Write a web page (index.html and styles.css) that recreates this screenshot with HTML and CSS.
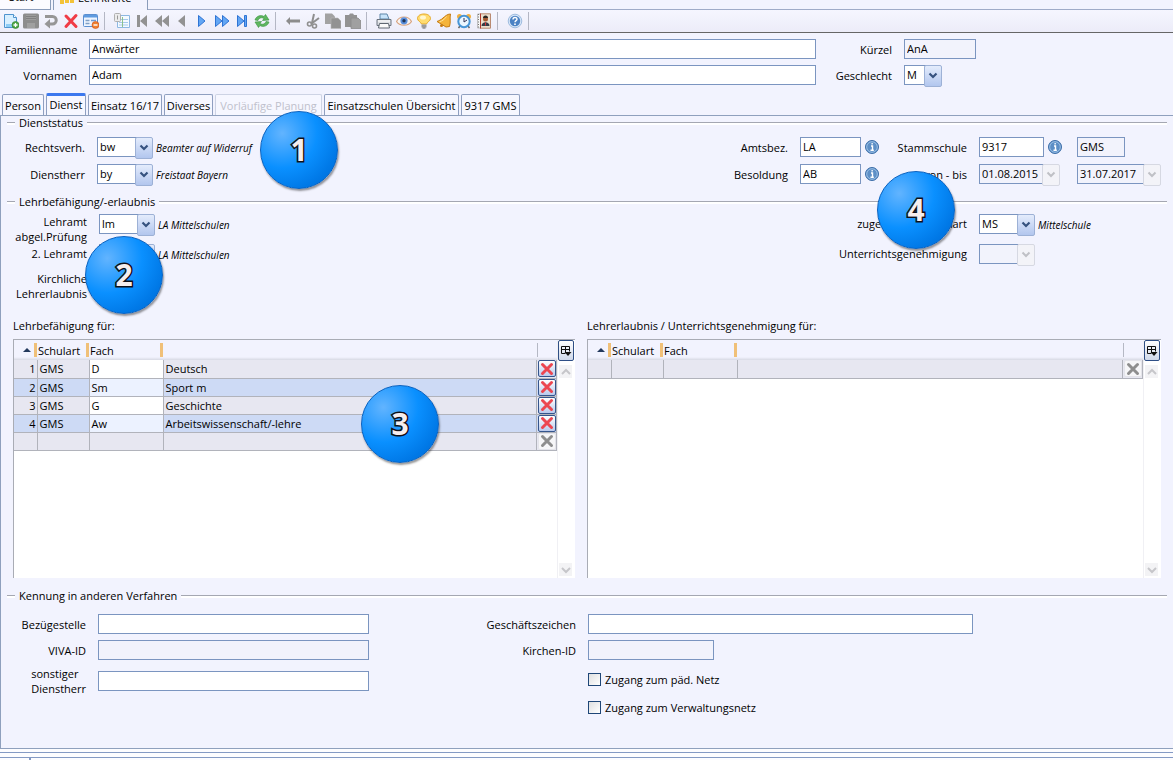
FILE: index.html
```html
<!DOCTYPE html>
<html lang="de">
<head>
<meta charset="utf-8">
<title>Lehrkräfte</title>
<link rel="stylesheet" href="styles.css">
</head>
<body>
<div class="app">
  <nav class="doc-tabs" aria-label="Dokumente">
    <a class="doc-tab" href="#start">Start <svg width="8" height="8" viewBox="0 0 8 8"><path d="M1 4h6" stroke="#b9bfd4" stroke-width="2"/></svg></a>
    <a class="doc-tab doc-tab-active" href="#lehr"><svg width="16" height="16" viewBox="0 0 16 16"><path d="M1 3h4v12H1zM6 5h4v9H6zM11 3h4v11h-4z" fill="#f3c238"/></svg>Lehrkräfte <svg width="8" height="8" viewBox="0 0 8 8"><path d="M1 4h6" stroke="#b9bfd4" stroke-width="2"/></svg></a>
    <span class="doc-rest"></span>
  </nav>

  <div class="toolbar" role="toolbar">
    <button class="tool" aria-label="Neu"><svg viewBox="0 0 16 16"><path d="M1.500 1.500h9l3 3v10h-12z" fill="#d8efff" stroke="#4f94cf"/><path d="M3 11h9v3H3z" fill="#8dccf5"/><path d="M10.500 1.500v3h3" fill="#fff" stroke="#4f94cf"/><circle cx="12.500" cy="12" r="3.500" fill="#4fa746" stroke="#2c7d2a" stroke-width=".6"/><path d="M12.500 10v4M10.500 12h4" stroke="#fff" stroke-width="1.300"/></svg></button>
    <button class="tool" aria-label="Speichern"><svg viewBox="0 0 16 16"><rect width="16" height="15" y=".5" rx="1.500" fill="#8d8d8d"/><path d="M3 2h10v5H3z" fill="#9c9c9c"/><path d="M3 3.500h10M3 5.500h10M4 11h8" stroke="#808080"/><path d="M4 10h8v5H4z" fill="#a0a0a0"/></svg></button>
    <button class="tool" aria-label="Rückgängig"><svg viewBox="0 0 16 16"><path d="M2 3.500h7.500a3.500 3.500 0 0 1 0 7.500H6" fill="none" stroke="#969696" stroke-width="3"/><path d="M7 6v9.500L1.500 11z" fill="#969696"/></svg></button>
    <button class="tool" aria-label="Löschen"><svg viewBox="0 0 16 16"><path d="M3 3l10 10.500M13 2.500L3 13.500" stroke="#f03c46" stroke-width="3" stroke-linecap="round"/></svg></button>
    <button class="tool" aria-label="Formular leeren"><svg viewBox="0 0 16 16"><rect x=".5" y="1.500" width="14" height="12" rx="1" fill="#eef5ff" stroke="#5c8fd0"/><path d="M1 2h13v2.500H1z" fill="#5f9be0"/><path d="M2.500 7.500h4M2.500 10.500h4" stroke="#7f9fc5" stroke-width="1.500"/><path d="M8 7.500h5" stroke="#6f9bd2" stroke-width="1.500"/><circle cx="12.500" cy="12" r="3.500" fill="#f08030" stroke="#cc4f12" stroke-width=".6"/><path d="M10.500 12h4" stroke="#fff" stroke-width="1.400"/></svg></button>
    <span class="sep"></span>
    <button class="tool" aria-label="Tabelle"><svg viewBox="0 0 16 16"><path d="M3.500 2.500h12v12h-12z" fill="#f4faff" stroke="#8db8e2"/><path d="M5 6.500h9M5 9.500h9M5 12h9" stroke="#a5c9ec"/><path d="M8.500 4v10" stroke="#8dc28a"/><rect x=".5" y=".5" width="6" height="8" rx="1" fill="#ececec" stroke="#b0b0b0"/><path d="M3.500 2.500v4" stroke="#999"/></svg></button>
    <button class="tool" aria-label="Erster"><svg viewBox="0 0 16 16"><path d="M3 2h3v12H3zM13 2v12L6 8z" fill="#929292"/></svg></button>
    <button class="tool" aria-label="Schnell zurück"><svg viewBox="0 0 16 16"><path d="M8 2v12L1 8zM15 2v12L8 8z" fill="#929292"/></svg></button>
    <button class="tool" aria-label="Zurück"><svg viewBox="0 0 16 16"><path d="M11 2v12L4 8z" fill="#929292"/></svg></button>
    <button class="tool" aria-label="Weiter"><svg viewBox="0 0 16 16"><path d="M4.500 2.500v11L11 8z" fill="#62a6f4" stroke="#2f74d4"/></svg></button>
    <button class="tool" aria-label="Schnell vor"><svg viewBox="0 0 16 16"><path d="M1.500 2.500v11L8 8zM8.500 2.500v11L15 8z" fill="#62a6f4" stroke="#2f74d4"/></svg></button>
    <button class="tool" aria-label="Letzter"><svg viewBox="0 0 16 16"><path d="M3.500 2.500v11L10 8zM10.500 2.500h2v11h-2z" fill="#62a6f4" stroke="#2f74d4"/></svg></button>
    <button class="tool" aria-label="Aktualisieren"><svg viewBox="0 0 16 16"><path d="M1 7c1-4 6-5.500 9-3.500L11.500 1.500l3.500 5.500-6.500.5L10 5.500C7.500 4 5 5 4 7.500z" fill="#5fb660" stroke="#35943c" stroke-width=".6"/><path d="M15 9c-1 4-6 5.500-9 3.500L4.500 14.500 1 9l6.500-.5L6 10.500c2.500 1.500 5 .5 6-2z" fill="#5fb660" stroke="#35943c" stroke-width=".6"/></svg></button>
    <span class="sep"></span>
    <button class="tool" aria-label="Pfeil"><svg viewBox="0 0 16 16"><path d="M1 8l4-4v2.500h10v3H5V12z" fill="#8c8c8c"/></svg></button>
    <button class="tool" aria-label="Ausschneiden"><svg viewBox="0 0 16 16"><path d="M9 1L7 10M14 5L6 11" stroke="#8f8f8f" stroke-width="2"/><circle cx="4.500" cy="11" r="2" fill="none" stroke="#8f8f8f" stroke-width="1.600"/><circle cx="9.500" cy="13" r="2" fill="none" stroke="#8f8f8f" stroke-width="1.600"/></svg></button>
    <button class="tool" aria-label="Kopieren"><svg viewBox="0 0 16 16"><path d="M0 .5h7l3 3V11H0z" fill="#a2a2a2"/><path d="M6 5h7l3 3v7.500H6z" fill="#929292" stroke="#bbb" stroke-width=".6"/></svg></button>
    <button class="tool" aria-label="Einfügen"><svg viewBox="0 0 16 16"><path d="M0 2h4l1-1.500h3L9 2h3v12H0z" fill="#939393"/><path d="M6 5h7l3 3v7.500H6z" fill="#a0a0a0" stroke="#8a8a8a" stroke-width=".8"/></svg></button>
    <span class="sep"></span>
    <button class="tool" aria-label="Drucken"><svg viewBox="0 0 16 16"><path d="M4 1h7l2 5H4z" fill="#c8e4fa" stroke="#5f86a8"/><path d="M1 6.500h14v6H1z" fill="#dcdfe3" stroke="#6c7580"/><path d="M3.500 10.500h9l1 4.500h-11z" fill="#fafafa" stroke="#606872"/><path d="M2 8h12" stroke="#fff"/></svg></button>
    <button class="tool" aria-label="Ansicht"><svg viewBox="0 0 16 16"><path d="M.5 8.500c3-6 12-6 15 0-3 5-12 5-15 0z" fill="#f7f4f2" stroke="#d8a27d" stroke-width="1.200"/><circle cx="8" cy="7.800" r="3.600" fill="#5a8fdc"/><circle cx="8" cy="7.800" r="1.700" fill="#1e3355"/></svg></button>
    <button class="tool" aria-label="Hinweis"><svg viewBox="0 0 16 16"><path d="M8 1c4 0 6.500 2 6.500 4.500S11 9 10.500 11h-5C5 9 1.500 8 1.500 5.500S4 1 8 1z" fill="#ffdc70" stroke="#e5a928"/><ellipse cx="7" cy="4.500" rx="3" ry="2" fill="#fff7d0"/><path d="M5.500 11.500h5v3h-5z" fill="#9b9b9b"/><path d="M6.500 15h3" stroke="#666"/></svg></button>
    <button class="tool" aria-label="Erinnerung"><svg viewBox="0 0 16 16"><path d="M14.500 1c-1 4 .5 8-1 12.500L10 14 1 8.500c2-1 4-1.500 6-3.500 2-1.500 4-4 7.500-4z" fill="#f5b43a" stroke="#c57b12"/><path d="M10.500 3.500C8 7 6 8 3.500 8.700" stroke="#ffe49a" fill="none"/><circle cx="5.500" cy="12.500" r="1.500" fill="#c57b12"/></svg></button>
    <button class="tool" aria-label="Wecker"><svg viewBox="0 0 16 16"><circle cx="3.500" cy="3.500" r="2.500" fill="#f0b040"/><circle cx="12.500" cy="3.500" r="2.500" fill="#f0b040"/><path d="M4 13l-1.500 2M12 13l1.500 2" stroke="#666" stroke-width="1.500"/><circle cx="8" cy="8.500" r="5.700" fill="#eaf6ff" stroke="#4695d6" stroke-width="2"/><path d="M8 5v4l3-2" stroke="#335" fill="none"/></svg></button>
    <button class="tool" aria-label="Adressbuch"><svg viewBox="0 0 16 16"><path d="M1.500 1h3v14h-3z" fill="#f5f5f5" stroke="#aaa" stroke-width=".7"/><path d="M4.500.8h10v14.400h-10z" fill="#eadfce" stroke="#b98a70"/><path d="M4.500.5v15" stroke="#b3392c"/><path d="M2.500 1v14" stroke="#777" stroke-dasharray="1 1.500"/><circle cx="9.500" cy="6" r="2.500" fill="#a35a32"/><path d="M7 5a2.500 2.500 0 0 1 5 0z" fill="#2c2520"/><path d="M5.500 13c0-5 8-5 8 0z" fill="#363d48"/><path d="M9.500 9.500v3" stroke="#d33"/></svg></button>
    <span class="sep"></span>
    <button class="tool" aria-label="Hilfe"><svg viewBox="0 0 16 16"><circle cx="8" cy="8" r="6.800" fill="#d6e5f7" stroke="#8db0d8" stroke-width=".8"/><circle cx="8" cy="8" r="5.200" fill="#4b82c4"/><path d="M6 6.500c0-2.800 4-2.600 4-.3C10 7.600 8 7.600 8 9.300" fill="none" stroke="#fff" stroke-width="1.400"/><circle cx="8" cy="11.200" r=".9" fill="#fff"/></svg></button>
    <span class="sep"></span>
  </div>

  <form class="person">
    <label class="lbl" for="fam">Familienname</label>
    <input class="text" id="fam" value="Anwärter">
    <label class="lbl" for="kuerzel">Kürzel</label>
    <input class="text ro w-kuerzel" id="kuerzel" value="AnA" readonly>
    <label class="lbl" for="vor">Vornamen</label>
    <input class="text" id="vor" value="Adam">
    <label class="lbl" for="sex">Geschlecht</label>
    <span class="combo combo-s"><select id="sex"><option>M</option></select></span>
  </form>

  <nav class="tabs" role="tablist">
    <button class="tab w1" role="tab">Person</button>
    <button class="tab w1 active" role="tab" aria-selected="true">Dienst</button>
    <button class="tab w2" role="tab">Einsatz 16/17</button>
    <button class="tab w3" role="tab">Diverses</button>
    <button class="tab w4" role="tab" disabled>Vorläufige Planung</button>
    <button class="tab w5" role="tab">Einsatzschulen Übersicht</button>
    <button class="tab w6" role="tab">9317 GMS</button>
  </nav>

  <main class="panel">
    <section>
      <h2 class="legend">Dienststatus</h2>
      <div class="status">
        <label class="lbl" for="rv">Rechtsverh.</label>
        <div class="field"><span class="combo"><select id="rv"><option>bw</option></select></span><em>Beamter auf Widerruf</em></div>
        <label class="lbl" for="amt">Amtsbez.</label>
        <div class="field"><input class="text w-amt" id="amt" value="LA"><button class="info" aria-label="Info"><svg viewBox="0 0 14 14"><use href="#info"/></svg></button></div>
        <label class="lbl" for="stamm">Stammschule</label>
        <div class="field"><input class="text w-date" id="stamm" value="9317"><button class="info" aria-label="Info"><svg viewBox="0 0 14 14"><use href="#info"/></svg></button></div>
        <input class="text ro w-gms" aria-label="Schulart" value="GMS" readonly>

        <label class="lbl" for="dh">Dienstherr</label>
        <div class="field"><span class="combo"><select id="dh"><option>by</option></select></span><em>Freistaat Bayern</em></div>
        <label class="lbl" for="bes">Besoldung</label>
        <div class="field"><input class="text w-amt" id="bes" value="AB"><button class="info" aria-label="Info"><svg viewBox="0 0 14 14"><use href="#info"/></svg></button></div>
        <label class="lbl" for="von">von - bis</label>
        <span class="combo combo-from off"><select id="von" disabled><option>01.08.2015</option></select></span>
        <span class="combo combo-to off"><select aria-label="bis" disabled><option>31.07.2017</option></select></span>
      </div>
    </section>

    <section>
      <h2 class="legend">Lehrbefähigung/-erlaubnis</h2>
      <div class="permits">
        <label class="lbl" for="la1">Lehramt<br>abgel.Prüfung</label>
        <div class="field"><span class="combo"><select id="la1"><option>lm</option></select></span><em>LA Mittelschulen</em></div>
        <label class="lbl" for="zs">zugeordnete Schulart</label>
        <div class="field"><span class="combo"><select id="zs"><option>MS</option></select></span><em>Mittelschule</em></div>
        <label class="lbl" for="la2">2. Lehramt</label>
        <div class="field"><span class="combo"><select id="la2"><option>lm</option></select></span><em>LA Mittelschulen</em></div>
        <label class="lbl" for="ug">Unterrichtsgenehmigung</label>
        <div class="field"><span class="combo off"><select id="ug" disabled><option></option></select></span></div>
        <span class="lbl church">Kirchliche<br>Lehrerlaubnis</span>
      </div>
    </section>

    <section class="lists">
      <div>
        <h3 class="list-title">Lehrbefähigung für:</h3>
        <div class="list">
          <table class="grid">
            <thead><tr><th class="c-nr"><svg class="sort" viewBox="0 0 8 4"><path d="M0 4l4-4 4 4z" fill="#23395d"/></svg></th><th class="c-art">Schulart</th><th class="c-fach">Fach</th><th class="c-text"></th><th class="c-del"></th></tr></thead>
            <tbody>
              <tr><td>1</td><td>GMS</td><td>D</td><td>Deutsch</td><td><button class="del" aria-label="Zeile löschen"><svg viewBox="0 0 14 14"><use href="#cross"/></svg></button></td></tr>
              <tr><td>2</td><td>GMS</td><td>Sm</td><td>Sport m</td><td><button class="del" aria-label="Zeile löschen"><svg viewBox="0 0 14 14"><use href="#cross"/></svg></button></td></tr>
              <tr><td>3</td><td>GMS</td><td>G</td><td>Geschichte</td><td><button class="del" aria-label="Zeile löschen"><svg viewBox="0 0 14 14"><use href="#cross"/></svg></button></td></tr>
              <tr><td>4</td><td>GMS</td><td>Aw</td><td>Arbeitswissenschaft/-lehre</td><td><button class="del" aria-label="Zeile löschen"><svg viewBox="0 0 14 14"><use href="#cross"/></svg></button></td></tr>
              <tr class="blank"><td></td><td></td><td></td><td></td><td><button class="del" disabled aria-label="Zeile löschen"><svg viewBox="0 0 14 14"><use href="#cross"/></svg></button></td></tr>
            </tbody>
          </table>
          <div class="rail">
            <button class="config" aria-label="Spalten"><svg viewBox="0 0 12 12"><use href="#cols"/></svg></button>
            <button class="arrow" aria-label="Nach oben"><svg viewBox="0 0 12 12"><path d="M2 8l4-4 4 4" /></svg></button>
            <button class="arrow arrow-end" aria-label="Nach unten"><svg viewBox="0 0 12 12"><path d="M2 4l4 4 4-4" /></svg></button>
          </div>
        </div>
      </div>
      <div>
        <h3 class="list-title">Lehrerlaubnis / Unterrichtsgenehmigung für:</h3>
        <div class="list">
          <table class="grid">
            <thead><tr><th class="c-nr"><svg class="sort" viewBox="0 0 8 4"><path d="M0 4l4-4 4 4z" fill="#23395d"/></svg></th><th class="c-art">Schulart</th><th class="c-fach">Fach</th><th class="c-text"></th><th class="c-del"></th></tr></thead>
            <tbody>
              <tr class="blank"><td></td><td></td><td></td><td></td><td><button class="del" disabled aria-label="Zeile löschen"><svg viewBox="0 0 14 14"><use href="#cross"/></svg></button></td></tr>
            </tbody>
          </table>
          <div class="rail">
            <button class="config" aria-label="Spalten"><svg viewBox="0 0 12 12"><use href="#cols"/></svg></button>
            <button class="arrow" aria-label="Nach oben"><svg viewBox="0 0 12 12"><path d="M2 8l4-4 4 4" /></svg></button>
            <button class="arrow arrow-end" aria-label="Nach unten"><svg viewBox="0 0 12 12"><path d="M2 4l4 4 4-4" /></svg></button>
          </div>
        </div>
      </div>
    </section>

    <section>
      <h2 class="legend">Kennung in anderen Verfahren</h2>
      <div class="ids">
        <div class="id-grid id-left">
          <label class="lbl" for="bz">Bezügestelle</label><input class="text" id="bz">
          <label class="lbl" for="viva">VIVA-ID</label><input class="text ro" id="viva" readonly>
          <label class="lbl two" for="sd"><span>sonstiger<br>Dienstherr</span></label><input class="text" id="sd">
        </div>
        <div class="id-grid id-right">
          <label class="lbl" for="gz">Geschäftszeichen</label><input class="text" id="gz">
          <label class="lbl" for="kid">Kirchen-ID</label><input class="text ro w-kid" id="kid" readonly>
          <div class="checks">
            <label class="check"><input type="checkbox">Zugang zum päd. Netz</label>
            <label class="check"><input type="checkbox">Zugang zum Verwaltungsnetz</label>
          </div>
        </div>
      </div>
    </section>
  </main>

  <footer class="foot"><div class="foot-bar"><span class="foot-cell"></span></div></footer>

  <span class="pin pin-1">1</span>
  <span class="pin pin-2">2</span>
  <span class="pin pin-3">3</span>
  <span class="pin pin-4">4</span>
</div>

<svg class="defs" aria-hidden="true">
  <symbol id="info" viewBox="0 0 14 14"><circle cx="7" cy="7" r="6.500" fill="#5d8fc6" stroke="#3d6ea8"/><circle cx="7" cy="7" r="5.300" fill="none" stroke="#a9cbec" stroke-width=".8"/><path d="M6 6h1.500v4M5.500 10.300h3.300M6.500 3.700h1.300" stroke="#fff" stroke-width="1.400" fill="none"/></symbol>
  <symbol id="cross" viewBox="0 0 14 14"><path d="M2.500 2.500l9 9M11.500 2.500l-9 9" stroke="currentColor" stroke-width="3" stroke-linecap="round"/></symbol>
  <symbol id="cols" viewBox="0 0 12 12"><path d="M5 8.500H1.500v-7h8v5M1.500 4.500h8M5.500 1.500v7" fill="none" stroke="#111"/><path d="M4.500 7h7L8 11z" fill="#111"/></symbol>
</svg>
</body>
</html>
```
FILE: styles.css
```css
* { box-sizing: border-box; }
body { margin: 0; background: #f2f3fe; color: #000; }
body, button, input, select { font-family: "Open Sans", "Noto Sans", sans-serif; font-size: 11px; line-height: 15px; }
button { padding: 0; border: 0; background: none; color: inherit; }
h2, h3 { margin: 0; font-size: 11px; font-weight: 400; line-height: 15px; }
svg { display: block; }
.defs { position: absolute; width: 0; height: 0; }
.app { position: relative; display: flex; flex-direction: column; min-height: 100vh; overflow: hidden; }

.doc-tabs { display: flex; align-items: flex-end; gap: 2px; height: 10px; overflow: hidden; }
.doc-tab { display: flex; align-items: center; gap: 3px; width: 51px; height: 24px; padding: 0 0 2px 9px; border: solid #8a9cba; border-width: 0 1px 1px 0; background: #fbfbff; color: #000; text-decoration: none; }
.doc-tab-active { width: 95px; padding-left: 5px; border-width: 0 1px 0 1px; background: #f2f3fe; }
.doc-rest { flex: 1; margin-left: -2px; border-bottom: 1px solid #9fabc8; }

.toolbar { display: flex; align-items: center; gap: 4px; height: 23px; padding-left: 3px; border-bottom: 1px solid #666; background: linear-gradient(#f5f6ff, #ececf8); }
.tool { width: 16px; height: 16px; }
.tool svg { width: 16px; height: 16px; }
.sep { width: 1px; height: 18px; margin: 0 5px 0 1px; background: #b4b7c4; }

.lbl { text-align: right; white-space: nowrap; }
.text { width: 100%; min-width: 0; height: 20px; padding: 0 2px 2px; border: 1px solid #7b95c0; border-radius: 0; background: #fff; color: #000; }
.ro { background: #f2f3fc; }
.combo { position: relative; display: block; width: 56px; height: 20px; flex: none; }
.combo select { appearance: none; width: calc(100% - 15px); height: 20px; padding: 0 2px 2px; border: 1px solid #7b95c0; border-radius: 0; background: #fff; color: #000; opacity: 1; overflow: hidden; display: block; }
.combo::after { content: ""; position: absolute; top: 0; right: 0; width: 16px; height: 20px; border: 1px solid #9db1d6; border-radius: 2px; pointer-events: none; background: url("data:image/svg+xml,%3Csvg xmlns='http://www.w3.org/2000/svg' width='10' height='8'%3E%3Cpath d='M1.500 1.500L5 5l3.500-3.500' fill='none' stroke='%2336527f' stroke-width='2.200'/%3E%3C/svg%3E") center 6px no-repeat, linear-gradient(#e4ecfc, #b2c6ee); }
.combo.off select { background: #f2f3fc; }
.combo.off::after { border-color: #d6d8e2; background: url("data:image/svg+xml,%3Csvg xmlns='http://www.w3.org/2000/svg' width='10' height='8'%3E%3Cpath d='M1.500 1.500L5 5l3.500-3.500' fill='none' stroke='%23bfc0c6' stroke-width='2'/%3E%3C/svg%3E") center 6px no-repeat, #f3f3f8; }
.combo.combo-s { width: 38px; }
.combo.combo-from { width: 81px; }
.combo.combo-to { width: 84px; }
.field { display: flex; align-items: center; gap: 3px; height: 20px; }
.field em { padding-top: 2px; font-size: 10px; white-space: nowrap; }
.info { width: 14px; height: 14px; margin-left: 1px; flex: none; }
.info svg { width: 14px; height: 14px; }

.person { display: grid; grid-template-columns: 72px minmax(0, 1fr) 64px 269px; gap: 6px 12px; align-items: center; padding: 6px 0 8px 5px; }
.text.w-kuerzel { width: 72px; }

.tabs { display: flex; align-items: flex-end; gap: 2px; height: 22px; padding-left: 2px; }
.tab { height: 21px; border: 1px solid #8f9fc0; border-bottom: 0; border-radius: 2px 2px 0 0; background: #f6f7ff; white-space: nowrap; }
.tab:disabled { border-color: #cdd3e4; color: #bfc1cc; }
.w1 { width: 42px; }
.w2 { width: 74px; }
.w3 { width: 49px; }
.w4 { width: 107px; }
.w5 { width: 135px; }
.w6 { width: 59px; }
.active { width: 40px; height: 22px; padding-bottom: 3px; border-top: 3px solid #3c78ee; }

.panel { display: flex; flex: 1; flex-direction: column; border: solid #8fa0bd; border-width: 1px 0 1px 1px; }
.legend { display: flex; align-items: center; gap: 4px; height: 14px; padding: 0 6px; line-height: 14px; }
.legend::before, .legend::after { content: ""; width: 8px; height: 2px; border-top: 1px solid #a4a7b2; background: #fff; }
.legend::after { flex: 1; }

.status { display: grid; grid-template-columns: 72px minmax(0, 1fr) 60px 79px 76px 86px 84px; gap: 7px 12px; align-items: center; padding: 7px 12px 11px; }
.text.w-amt { width: 61px; }
.text.w-date { width: 65px; }
.text.w-gms { width: 48px; }

.permits { display: grid; grid-template-columns: 74px minmax(0, 1fr) 140px 182px; column-gap: 12px; padding: 5px 12px 17px; }
.permits .lbl { padding-top: 2px; }
.permits .lbl:first-child { height: 30px; padding-top: 0; }
.permits .church { margin-top: 7px; padding-top: 0; }

.lists { display: grid; grid-template-columns: 562fr 574fr; gap: 12px; padding: 0 12px; }
.list { display: flex; align-items: flex-start; height: 239px; margin: 6px 0 11px; border: solid #a9acb5; border-width: 1px 0 0 1px; background: #fff; }
.grid { flex: 1; min-width: 0; table-layout: fixed; border-collapse: collapse; width: 100%; }
.grid th { position: relative; height: 20px; padding: 0 1px; background: linear-gradient(#f2f3fe 85%, #d8dae4); font-weight: 400; text-align: left; }
.grid th + th::before { content: ""; position: absolute; top: 3px; bottom: 3px; left: -3px; width: 3px; background: #f0c078; }
.grid .c-del::before { width: 1px; left: 0; background: #b5b8c4; }
.grid .c-nr { width: 23px; }
.c-art { width: 52px; }
.c-fach { width: 74px; }
.c-del { width: 20px; }
.sort { width: 8px; height: 4px; margin-left: 8px; }
.grid td { height: 18px; padding: 0 1px 0 2px; border: 1px solid #b1b3bb; border-width: 0 1px 1px 0; background: #e7e7f1; line-height: 15px; white-space: nowrap; }
.grid td:last-child { padding-left: 1px; }
.grid td:first-child { text-align: right; }
.grid td:nth-child(3) { background: #fff; }
.grid tr:nth-child(even) td { background: #cddaf5; }
.grid tr:nth-child(even) td:nth-child(3) { background: #ecf2ff; }
.grid .blank td:nth-child(3) { background: #e7e7f1; }
.del { display: grid; place-items: center; width: 18px; height: 17px; border: 1px solid #35558c; border-radius: 2px; background: linear-gradient(#fff, #b9c9ec); color: #ec4650; }
.del:disabled { border-color: #e4e4ea; background: #f6f6f8; color: #8e8e8e; }
.del svg { width: 14px; height: 14px; }
.rail { display: flex; flex: none; flex-direction: column; align-items: flex-start; width: 18px; height: 100%; border-left: 1px solid #f0f0f4; }
.config { display: grid; place-items: center; width: 16px; height: 21px; border: 1px solid #2f4f86; border-radius: 2px; background: linear-gradient(#fff, #cfd8ea); }
.config svg { width: 12px; height: 12px; }
.arrow { display: grid; place-items: center; width: 13px; height: 13px; margin: 4px 1px 0; background: #f3f3f5; }
.arrow svg { width: 12px; height: 12px; fill: none; stroke: #c6c6ca; stroke-width: 2; }
.arrow-end { margin: auto 1px 2px; }

.ids { display: flex; justify-content: flex-start; gap: 97px; padding: 11px 200px 0 12px; }
.id-grid { display: grid; column-gap: 12px; align-content: start; row-gap: 6px; align-items: center; }
.id-left { grid-template-columns: 73px 271px; }
.id-right { flex: 1; grid-template-columns: 110px minmax(0, 1fr); }
.two { display: flex; justify-content: flex-end; }
.two span { text-align: left; }
.text.w-kid { width: 126px; }
.checks { display: grid; grid-column: 2; gap: 13px; padding-top: 6px; }
.check { display: flex; align-items: center; gap: 4px; }
.check input { appearance: none; width: 13px; height: 13px; margin: 0; border: 1px solid #1f4677; background: linear-gradient(135deg, #dedfe0, #fff); }

.foot { flex: none; height: 11px; padding-top: 3px; background: #fcfcff; }
.foot-bar { height: 8px; padding-top: 4px; border-top: 1px solid #8399c4; }
.foot-cell { display: block; height: 3px; border-top: 1px solid #8399c4; background: linear-gradient(90deg, transparent 29px, #8399c4 29px, #8399c4 31px, transparent 31px); }

.pin { position: absolute; display: grid; place-items: center; width: 78px; height: 78px; border: 1px solid #0a62c0; border-radius: 50%; background: radial-gradient(circle at 28% 28%, #62b4ff, #0a90ff 45%, #0078e6 75%, #0068d0); box-shadow: 1px 2px 2px #0006; color: #f6eeee; font-size: 30px; font-weight: 700; line-height: 40px; -webkit-text-stroke: 3px #101018; paint-order: stroke fill; }
.pin-1 { left: 260px; top: 111px; }
.pin-2 { left: 85px; top: 236px; }
.pin-3 { left: 361px; top: 385px; }
.pin-4 { right: 218px; top: 171px; }
```
